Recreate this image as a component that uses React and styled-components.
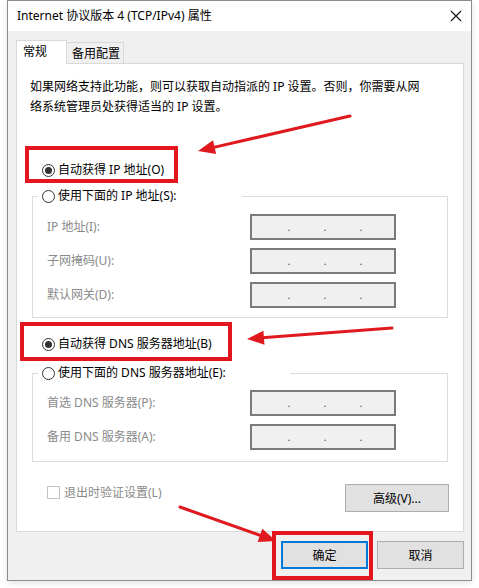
import React from 'react';
import styled, { createGlobalStyle } from 'styled-components';

const GlobalStyle = createGlobalStyle`
  html, body {
    margin: 0;
    padding: 0;
    background: #ffffff;
  }
  body {
    font-family: "Noto Sans", "Noto Sans CJK SC", sans-serif;
    font-size: 12px;
    color: #000;
  }
`;

const RED = '#e3161d';

const Page = styled.div`
  position: relative;
  width: 479px;
  height: 588px;
  padding-left: 7px;
  box-sizing: border-box;
`;

const Window = styled.div`
  width: 465px;
  height: 581px;
  box-sizing: border-box;
  border: 1px solid #8c8c8c;
  background: #f0f0f0;
  display: flex;
  flex-direction: column;
  box-shadow: 0 2px 6px rgba(0, 0, 0, 0.12);
`;

const TitleBar = styled.div`
  height: 30px;
  background: #fff;
  display: flex;
  align-items: center;
  justify-content: space-between;
  padding: 0 9px 0 9px;
  font-size: 12px;
  line-height: 14px;
`;

const Body = styled.div`
  padding: 9px 7px 0 8px;
  display: flex;
  flex-direction: column;
`;

const Tabs = styled.div`
  display: flex;
  align-items: flex-end;
  height: 24px;
  margin-bottom: -1px;
  position: relative;
  z-index: 1;
`;

const Tab = styled.div`
  box-sizing: border-box;
  border: 1px solid #d9d9d9;
  border-bottom: none;
  background: ${p => (p.active ? '#fff' : '#f0f0f0')};
  height: ${p => (p.active ? '24px' : '21px')};
  width: ${p => p.w}px;
  margin-left: ${p => (p.active ? '0' : '-1px')};
  margin-bottom: ${p => (p.active ? '0' : '1px')};
  padding-left: ${p => (p.active ? '6px' : '5px')};
  padding-top: ${p => (p.active ? '4px' : '4px')};
  line-height: 14px;
`;

const Panel = styled.div`
  box-sizing: border-box;
  height: 469px;
  background: #fff;
  border: 1px solid #d9d9d9;
  display: flex;
  flex-direction: column;
`;

const Description = styled.p`
  margin: 13px 0 0 13px;
  line-height: 20px;
`;

const Highlight = styled.div`
  box-sizing: border-box;
  border: 4px solid ${RED};
  width: ${p => p.w}px;
  height: ${p => p.h}px;
  margin: ${p => p.m};
  padding: ${p => p.pad};
`;

const RadioRow = styled.label`
  display: flex;
  align-items: center;
  height: 14px;
  line-height: 14px;
  white-space: nowrap;
`;

const RadioDot = styled.span`
  box-sizing: border-box;
  width: 13px;
  height: 13px;
  border: 1px solid #333;
  border-radius: 50%;
  background: #fff;
  margin-right: 3px;
  display: inline-flex;
  align-items: center;
  justify-content: center;
  flex: none;
  &::after {
    content: '';
    display: ${p => (p.checked ? 'block' : 'none')};
    width: 7px;
    height: 7px;
    border-radius: 50%;
    background: #333;
  }
`;

const Group = styled.fieldset`
  box-sizing: border-box;
  width: 416px;
  margin: ${p => p.m};
  padding: 0;
  border: 1px solid #dcdcdc;
  min-inline-size: 0;
`;

const Legend = styled.legend`
  box-sizing: border-box;
  width: ${p => p.w}px;
  margin-left: 5px;
  padding: 0 4px;
  height: 14px;
`;

const Rows = styled.div`
  display: grid;
  grid-template-columns: 203px 146px;
  row-gap: 8px;
  padding: ${p => p.pad};
`;

const FieldLabel = styled.span`
  color: #8a8a8a;
  line-height: 26px;
`;

const IpBox = styled.div`
  box-sizing: border-box;
  height: 26px;
  border: 2px solid #7a7a7a;
  background: #f0f0f0;
  display: flex;
  align-items: center;
  justify-content: center;
  gap: 33px;
  padding-left: 4px;
  color: #555;
  font-size: 11px;
  line-height: 10px;
`;

const BottomRow = styled.div`
  display: flex;
  justify-content: space-between;
  align-items: flex-start;
  margin: 22px 14px 0 30px;
`;

const CheckRow = styled.label`
  display: flex;
  align-items: center;
  color: #8a8a8a;
  margin-top: 2px;
  line-height: 13px;
`;

const CheckBox = styled.span`
  box-sizing: border-box;
  width: 13px;
  height: 13px;
  border: 1px solid #c4c4c4;
  background: #fff;
  margin-right: 4px;
`;

const Button = styled.button`
  box-sizing: border-box;
  width: ${p => p.w}px;
  height: 28px;
  font: inherit;
  font-size: 12px;
  color: #000;
  background: #e1e1e1;
  border: ${p => (p.primary ? '2px solid #0078d7' : '1px solid #adadad')};
  padding: 0;
  display: flex;
  align-items: center;
  justify-content: center;
`;

const Footer = styled.div`
  display: flex;
  justify-content: flex-end;
  align-items: center;
  gap: 9px;
  margin-top: 9px;
`;

const ButtonMark = styled.div`
  border: 4px solid ${RED};
  padding: 6px 1px 7px 5px;
  margin: -10px -5px -11px -9px;
`;

const Overlay = styled.svg`
  position: absolute;
  left: 0;
  top: 0;
  pointer-events: none;
`;

const Arrow = ({ from, to }) => {
  const dx = to[0] - from[0];
  const dy = to[1] - from[1];
  const len = Math.hypot(dx, dy);
  const ux = dx / len;
  const uy = dy / len;
  const bx = to[0] - ux * 17;
  const by = to[1] - uy * 17;
  const nx = -uy * 7;
  const ny = ux * 7;
  const pts = `${to[0]},${to[1]} ${bx + nx},${by + ny} ${bx - nx},${by - ny}`;
  return (
    <g>
      <line x1={from[0]} y1={from[1]} x2={bx + ux * 2} y2={by + uy * 2} stroke="#e0191f" strokeWidth="3" strokeLinecap="round" />
      <polygon points={pts} fill="#e0191f" />
    </g>
  );
};

const IpField = ({ label }) => (
  <>
    <FieldLabel>{label}</FieldLabel>
    <IpBox>
      <span>.</span>
      <span>.</span>
      <span>.</span>
    </IpBox>
  </>
);

export default function App() {
  return (
    <>
      <GlobalStyle />
      <Page>
        <Window>
          <TitleBar>
            <span>Internet 协议版本 4 (TCP/IPv4) 属性</span>
            <svg width="12" height="12" viewBox="0 0 12 12">
              <path d="M1 1 L11 11 M11 1 L1 11" stroke="#111" strokeWidth="1.1" />
            </svg>
          </TitleBar>
          <Body>
            <Tabs>
              <Tab active w={51}>常规</Tab>
              <Tab w={58}>备用配置</Tab>
            </Tabs>
            <Panel>
              <Description>
                如果网络支持此功能，则可以获取自动指派的 IP 设置。否则，你需要从网
                <br />
                络系统管理员处获得适当的 IP 设置。
              </Description>

              <Highlight w={153} h={37} m="29px 0 0 8px" pad="13px 0 0 13px">
                <RadioRow>
                  <RadioDot checked />
                  自动获得 IP 地址(O)
                </RadioRow>
              </Highlight>

              <Group m="6px 0 0 15px">
                <Legend w={204}>
                  <RadioRow>
                    <RadioDot />
                    使用下面的 IP 地址(S):
                  </RadioRow>
                </Legend>
                <Rows pad="11px 0 9px 14px">
                  <IpField label="IP 地址(I):" />
                  <IpField label="子网掩码(U):" />
                  <IpField label="默认网关(D):" />
                </Rows>
              </Group>

              <Highlight w={212} h={39} m="4px 0 0 3px" pad="11px 0 0 18px">
                <RadioRow>
                  <RadioDot checked />
                  自动获得 DNS 服务器地址(B)
                </RadioRow>
              </Highlight>

              <Group m="5px 0 0 15px">
                <Legend w={252}>
                  <RadioRow>
                    <RadioDot />
                    使用下面的 DNS 服务器地址(E):
                  </RadioRow>
                </Legend>
                <Rows pad="10px 0 11px 14px">
                  <IpField label="首选 DNS 服务器(P):" />
                  <IpField label="备用 DNS 服务器(A):" />
                </Rows>
              </Group>

              <BottomRow>
                <CheckRow>
                  <CheckBox />
                  退出时验证设置(L)
                </CheckRow>
                <Button w={104}>高级(V)...</Button>
              </BottomRow>
            </Panel>
            <Footer>
              <ButtonMark>
                <Button primary w={87}>确定</Button>
              </ButtonMark>
              <Button w={87}>取消</Button>
            </Footer>
          </Body>
        </Window>
        <Overlay width="479" height="588">
          <Arrow from={[350, 116]} to={[198, 151]} />
          <Arrow from={[392, 328]} to={[247, 339]} />
          <Arrow from={[180, 507]} to={[276, 541]} />
        </Overlay>
      </Page>
    </>
  );
}
